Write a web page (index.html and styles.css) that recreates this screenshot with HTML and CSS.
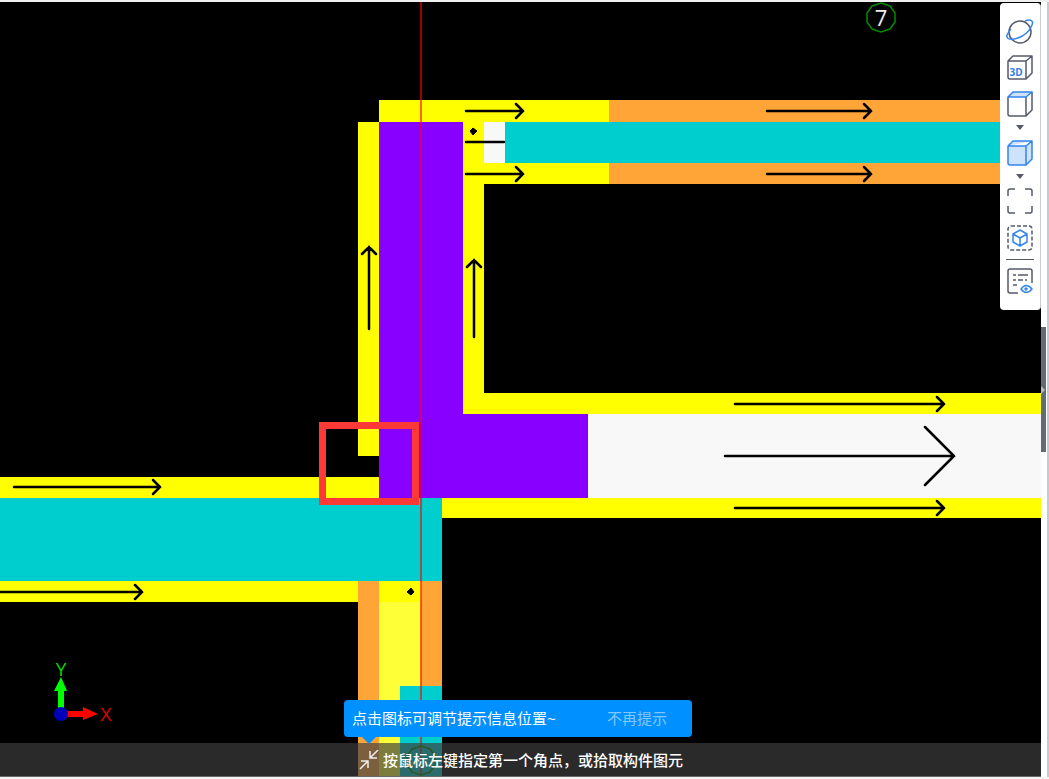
FILE: index.html
```html
<!DOCTYPE html>
<html lang="zh-CN">
<head>
<meta charset="utf-8">
<title>构件绘图</title>
<link rel="stylesheet" href="styles.css">
</head>
<body>
<div class="app">
  <main class="viewport">
    <svg class="drawing" viewBox="0 2 1041 775" preserveAspectRatio="xMinYMin slice" role="img" aria-label="平面图">
      <g class="yellow">
        <path d="M379 100H609V184H484V393H1041V414H463V122H379Z"/>
        <path d="M358 122H379V456H358Z"/>
        <path d="M0 477H379V498H0Z"/>
        <path d="M442 498H1041V518H442Z"/>
        <path d="M0 581H358V602H0Z"/>
        <path d="M379 581H421V602H379Z"/>
      </g>
      <path class="pale-yellow" d="M379 602H421V777H379Z"/>
      <g class="orange">
        <path d="M609 100H1041V122H609Z"/>
        <path d="M609 163H1041V184H609Z"/>
        <path d="M358 581H379V777H358Z"/>
        <path d="M421 581H442V777H421Z"/>
      </g>
      <path class="violet" d="M379 122H463V414H588V498H379Z"/>
      <path class="white" d="M484 122H505V163H484ZM588 414H1041V498H588Z"/>
      <g class="cyan">
        <path d="M505 122H1041V163H505Z"/>
        <path d="M0 498H442V581H0Z"/>
        <path d="M400 686H442V777H400Z"/>
      </g>
      <path class="axis-line" d="M421 2V777"/>
      <g class="arrows">
        <path d="M466 111H523M516 104L523 111L516 118"/>
        <path d="M466 142H504"/>
        <path d="M466 174H523M516 167L523 174L516 181"/>
        <path d="M767 111H871M864 104L871 111L864 118"/>
        <path d="M767 174H871M864 167L871 174L864 181"/>
        <path d="M369 329V247M362 254L369 247L376 254"/>
        <path d="M474 337V260M467 267L474 260L481 267"/>
        <path d="M735 404H944M937 397L944 404L937 411"/>
        <path d="M735 508H944M937 501L944 508L937 515"/>
        <path d="M725 456H954M925 427L954 456L925 485"/>
        <path d="M14 487H160M153 480L160 487L153 494"/>
        <path d="M0 592H142M135 585L142 592L135 599"/>
      </g>
      <path class="dot" d="M470 131L473 128L477 131L473 135ZM407 592L411 588L414 592L411 595Z"/>
      <rect class="marker" x="322.5" y="425.5" width="93" height="76"/>
      <path class="grid-bubble" d="M881 3L890 6L895 13V22L890 29L881 32L872 29L867 22V13L872 6Z"/>
      <text class="grid-number" x="881" y="26">7</text>
      <path class="grid-bubble" d="M421 746L430 749L435 756V765L430 772L421 775L412 772L407 765V756L412 749Z"/>
      <g class="origin">
        <path class="axis-y" d="M58 708V691H54L61 677L67 691H64V708Z"/>
        <path class="axis-x" d="M67 711H83V707L98 714L83 720V717H67Z"/>
        <circle class="axis-z" cx="61" cy="714" r="7"/>
        <text class="label-y" x="61" y="676">Y</text>
        <text class="label-x" x="106" y="721">X</text>
      </g>
    </svg>

    <nav class="toolbar" aria-label="视图工具">
      <button class="tool" type="button" aria-label="动态观察">
        <svg viewBox="0 0 28 28"><circle class="ink" cx="14" cy="15" r="11"/><path class="blue" d="M19 4C24 2 28 3 26 8C24 14 18 19 12 21C6 23 0 23 1 18C2 16 3 14 5 12"/></svg>
      </button>
      <button class="tool" type="button" aria-label="三维">
        <svg viewBox="0 0 28 28"><path class="ink" d="M2 8H20V26H4Q2 26 2 24ZM2 8L7 3H26L20 8M26 3V20L20 26"/><text class="badge" x="10" y="23">3D</text></svg>
      </button>
      <button class="tool" type="button" aria-label="俯视">
        <svg viewBox="0 0 28 28"><path class="ink" d="M2 8V25Q2 27 4 27H20V8M20 27L26 21V3"/><path class="blue tint" d="M2 8L7 3H26L20 8Z"/></svg>
      </button>
      <button class="caret" type="button" aria-label="更多视角"><svg viewBox="0 0 8 5"><path d="M0 0H8L4 5Z"/></svg></button>
      <button class="tool" type="button" aria-label="实体显示">
        <svg viewBox="0 0 28 28"><path class="blue tint" d="M2 8L7 3H26V21L20 27H4Q2 27 2 25ZM2 8H20L26 3M20 8V27"/></svg>
      </button>
      <button class="caret" type="button" aria-label="更多显示方式"><svg viewBox="0 0 8 5"><path d="M0 0H8L4 5Z"/></svg></button>
      <button class="tool" type="button" aria-label="全屏">
        <svg viewBox="0 0 28 28"><path class="ink" d="M2 9V4Q2 2 4 2H9M19 2H24Q26 2 26 4V9M26 19V24Q26 26 24 26H19M9 26H4Q2 26 2 24V19"/></svg>
      </button>
      <button class="tool" type="button" aria-label="局部显示">
        <svg viewBox="0 0 28 28"><rect class="ink dashed" x="2" y="3" width="24" height="24" rx="3"/><path class="blue" d="M14 7L21 11V19L14 23L7 19V11ZM7 11L14 15L21 11M14 15V23"/></svg>
      </button>
      <hr class="divider">
      <button class="tool" type="button" aria-label="显示设置">
        <svg viewBox="0 0 28 28"><path class="ink" d="M12 25H4Q2 25 2 23V3Q2 1 4 1H24Q26 1 26 3V15M7 7H10M12 7H22M7 12H10M12 12H17M19 12H21M7 17H11"/><path class="blue" d="M15 21Q20 14 26 21Q20 28 15 21Z"/><circle class="blue" cx="20" cy="21" r="1"/></svg>
      </button>
    </nav>

    <div class="prompt">
      <div class="tip" role="status">
        <span>点击图标可调节提示信息位置~</span>
        <button class="dismiss" type="button">不再提示</button>
      </div>
      <button class="dock" type="button" aria-label="调节提示位置">
        <svg viewBox="0 0 20 20"><path d="M19 0L11 8M11 1V8H18M1 19L9 11M2 11H9V18"/></svg>
      </button>
      <span class="message">按鼠标左键指定第一个角点，或拾取构件图元</span>
    </div>
  </main>
  <aside class="gutter">
    <button class="splitter" type="button" aria-label="展开侧栏"><svg viewBox="0 0 4 8"><path d="M0 0L4 4L0 8Z"/></svg></button>
  </aside>
</div>
</body>
</html>
```
FILE: styles.css
```css
* {
  box-sizing: border-box;
}

body {
  margin: 0;
  font-family: "Liberation Sans", "Noto Sans CJK SC", sans-serif;
  background: #fff;
}

button {
  display: block;
  padding: 0;
  border: 0;
  background: none;
  font: inherit;
  cursor: pointer;
}

svg {
  display: block;
}

.app {
  display: grid;
  grid-template-columns: 1fr 8px;
  min-height: 100vh;
  border-top: 2px solid #f0f0f0;
  border-bottom: 2px solid #f4f4f4;
}

.viewport {
  position: relative;
  display: flex;
  flex-direction: column;
  justify-content: space-between;
  overflow: hidden;
  background: #000;
}

.drawing {
  position: absolute;
  inset: 0;
  width: 100%;
  height: 100%;
}

.yellow { fill: #ff0; }
.pale-yellow { fill: #ffff38; }
.orange { fill: #ffa538; }
.violet { fill: #80f; }
.white { fill: #f8f8f8; }
.cyan { fill: #00cece; }

.axis-line {
  stroke: rgba(255, 0, 0, 0.6);
  stroke-width: 2;
}

.arrows {
  fill: none;
  stroke: #000;
  stroke-width: 2.5;
  stroke-linecap: round;
}

.dot {
  stroke: #000;
  stroke-width: 1;
}

.marker {
  fill: none;
  stroke: #fb3a38;
  stroke-width: 7;
}

.grid-bubble {
  fill: none;
  stroke: #008a00;
  stroke-width: 1.5;
}

.grid-number {
  fill: #eee;
  font-family: "Open Sans", sans-serif;
  font-size: 22px;
  text-anchor: middle;
}

.axis-y { fill: #0f0; }
.axis-x { fill: #f00; }
.axis-z { fill: #00b; }

.label-x, .label-y {
  font-family: "Open Sans", sans-serif;
  font-size: 19px;
  font-weight: 400;
  text-anchor: middle;
}

.label-x { fill: #e00000; }
.label-y { fill: #00d800; }

.toolbar {
  position: relative;
  display: flex;
  flex-direction: column;
  align-items: center;
  align-self: flex-end;
  gap: 8px;
  width: 41px;
  margin-top: 1px;
  padding: 14px 0;
  border-right: 1px solid #ccc;
  border-radius: 4px;
  background: #fff;
}

.tool, .tool svg {
  width: 28px;
  height: 28px;
}

.caret, .caret svg {
  width: 8px;
  height: 5px;
}

.caret {
  fill: #555a66;
}

.ink, .blue {
  fill: none;
  stroke: #555a6b;
  stroke-width: 1.5;
  stroke-linejoin: round;
}

.blue {
  stroke: #3385ec;
}

.tint {
  fill: #cfe2fb;
}

.dashed {
  stroke-dasharray: 4 2;
}

.badge {
  fill: #2f80e8;
  font-family: "Open Sans", sans-serif;
  font-size: 10px;
  font-weight: 700;
  text-anchor: middle;
}

.divider {
  width: 28px;
  height: 1px;
  margin: 0;
  border: 0;
  background: #555a66;
}

.prompt {
  position: relative;
  display: flex;
  align-items: center;
  gap: 4px;
  height: 34px;
  padding-left: 359px;
  border-bottom: 1px solid #666;
  background: rgba(62, 62, 62, 0.68);
  color: #fff;
  font-size: 15px;
}

.dock, .dock svg {
  width: 20px;
  height: 20px;
}

.dock {
  fill: none;
  stroke: #eee;
  stroke-width: 1.5;
}

.message {
  font-weight: 500;
  white-space: nowrap;
}

.tip {
  position: absolute;
  bottom: 39px;
  left: 344px;
  display: flex;
  align-items: center;
  justify-content: space-between;
  width: 348px;
  height: 37px;
  padding: 0 25px 2px 8px;
  border-radius: 4px;
  background: #0090ff;
  white-space: nowrap;
}

.tip::after {
  content: "";
  position: absolute;
  top: 100%;
  left: 18px;
  border: 7px solid transparent;
  border-top-color: #0090ff;
  border-bottom: 0;
}

.dismiss {
  color: #80c7ff;
}

.gutter {
  display: flex;
  align-items: center;
  border-right: 2px solid #c6c9cf;
}

.splitter {
  width: 5px;
  height: 125px;
  background: #626c78;
}

.splitter svg {
  width: 4px;
  height: 8px;
  fill: #bbb;
}
```
